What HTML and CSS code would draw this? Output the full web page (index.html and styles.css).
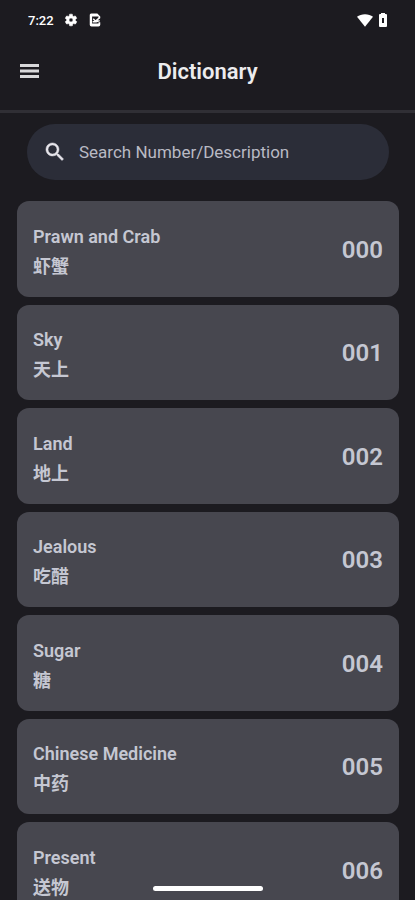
FILE: index.html
```html
<!DOCTYPE html>
<html lang="en">
<head>
<meta charset="utf-8">
<meta name="viewport" content="width=device-width, initial-scale=1">
<title>Dictionary</title>
<link rel="stylesheet" href="styles.css">
</head>
<body>
<div class="status">
  <div class="status-group">
    <span class="clock">7:22</span>
    <svg class="status-icon" viewBox="0 0 24 24" aria-hidden="true"><path fill="currentColor" stroke="currentColor" fill-rule="evenodd" d="M19.4 13a7.500 7.500 0 0 0 0-2l2.100-1.700c.2-.1.300-.4.100-.6l-2-3.500c-.1-.2-.4-.3-.6-.2l-2.500 1a7.300 7.300 0 0 0-1.700-1l-.4-2.600a.5.5 0 0 0-.5-.4h-4a.5.5 0 0 0-.5.4L9.100 5a7.700 7.700 0 0 0-1.700 1L5 5c-.2-.1-.5 0-.6.200l-2 3.500c-.1.200-.1.500.1.600L4.600 11a8 8 0 0 0 0 2l-2.100 1.700c-.2.100-.2.400-.1.600l2 3.500c.1.200.4.300.6.200l2.400-1c.5.400 1.100.7 1.700 1l.4 2.600c0 .2.200.4.500.4h4c.2 0 .5-.2.500-.4l.4-2.600c.6-.3 1.200-.6 1.700-1l2.500 1c.2.100.5 0 .6-.2l2-3.500c.1-.2.100-.5-.1-.6zM12 15.500a3.500 3.500 0 1 1 0-7 3.500 3.500 0 0 1 0 7z"/></svg>
    <svg class="status-icon" viewBox="0 0 24 24" aria-hidden="true"><path fill="currentColor" fill-rule="evenodd" d="M7 1h9l5 5v3h-3V6H7v12h11v-2h3v4a3 3 0 0 1-3 3H6a3 3 0 0 1-3-3V4a3 3 0 0 1 4-3z"/><path fill="none" stroke="currentColor" stroke-width="2.500" d="M9 10l4 4 7-6M8 15h6l6-2"/></svg>
  </div>
  <div class="status-group status-right">
    <svg class="status-icon wifi" viewBox="0 0 24 20" aria-hidden="true"><path fill="currentColor" d="M12 20L0 5C6 0 18 0 24 5z"/></svg>
    <svg class="battery" viewBox="0 0 10 14" aria-hidden="true"><path fill="currentColor" fill-rule="evenodd" d="M3 0h4v1h1a1 1 0 0 1 1 1v11a1 1 0 0 1-1 1H2a1 1 0 0 1-1-1V2a1 1 0 0 1 1-1h1zM4 5h2v5H4z"/></svg>
  </div>
</div>
<header class="bar">
  <button class="menu" type="button" aria-label="Menu">
    <svg viewBox="0 0 20 14" aria-hidden="true"><path fill="currentColor" d="M0 0h19v3H0zM0 5.500h19v3H0zM0 11h19v3H0z"/></svg>
  </button>
  <h1 class="title">Dictionary</h1>
</header>
<main>
  <form class="search" role="search">
    <label class="search-icon" for="query" aria-label="Search"><svg viewBox="0 0 24 24" aria-hidden="true"><path fill="currentColor" stroke="currentColor" stroke-width=".5" d="M15.500 14h-.8l-.3-.3A6.500 6.500 0 1 0 13.700 14.400l.3.300v.8l5 5 1.500-1.500zm-6 0a4.500 4.500 0 1 1 0-9 4.500 4.500 0 0 1 0 9z"/></svg></label>
    <input class="search-input" id="query" type="text" placeholder="Search Number/Description">
  </form>
  <ul class="list">
    <li class="card"><div class="words"><p class="name">Prawn and Crab</p><p class="hanzi" lang="zh-Hans">虾蟹</p></div><span class="number">000</span></li>
    <li class="card"><div class="words"><p class="name">Sky</p><p class="hanzi" lang="zh-Hans">天上</p></div><span class="number">001</span></li>
    <li class="card"><div class="words"><p class="name">Land</p><p class="hanzi" lang="zh-Hans">地上</p></div><span class="number">002</span></li>
    <li class="card"><div class="words"><p class="name">Jealous</p><p class="hanzi" lang="zh-Hans">吃醋</p></div><span class="number">003</span></li>
    <li class="card"><div class="words"><p class="name">Sugar</p><p class="hanzi" lang="zh-Hans">糖</p></div><span class="number">004</span></li>
    <li class="card"><div class="words"><p class="name">Chinese Medicine</p><p class="hanzi" lang="zh-Hans">中药</p></div><span class="number">005</span></li>
    <li class="card"><div class="words"><p class="name">Present</p><p class="hanzi" lang="zh-Hans">送物</p></div><span class="number">006</span></li>
  </ul>
</main>
<div class="home-indicator"></div>
</body>
</html>
```
FILE: styles.css
```css
* {
  box-sizing: border-box;
}

body {
  margin: 0;
  height: 100vh;
  display: flex;
  flex-direction: column;
  overflow: hidden;
  background: #1c1b20;
  color: #c5c7d2;
  font-family: Roboto, "Noto Sans CJK SC", sans-serif;
}

.status {
  flex: none;
  height: 40px;
  padding: 0 27px 0 28px;
  display: flex;
  align-items: center;
  justify-content: space-between;
  color: #fff;
}

.status-group {
  display: flex;
  align-items: center;
  gap: 10px;
}

.status-right {
  gap: 5px;
}

.clock {
  font-size: 13px;
  font-weight: 500;
}

.status-icon {
  width: 14px;
  height: 14px;
}

.wifi {
  width: 16px;
}

.battery {
  width: 10px;
  height: 14px;
}

.bar {
  flex: none;
  height: 73px;
  padding: 0 20px 8px;
  display: grid;
  grid-template-columns: 20px 1fr 20px;
  align-items: center;
  border-bottom: 3px solid #302f35;
}

.menu {
  padding: 0;
  border: 0;
  background: none;
  color: #d8d8da;
  line-height: 0;
}

.menu svg {
  width: 20px;
  height: 14px;
}

.title {
  margin: 0;
  text-align: center;
  font-size: 22px;
  font-weight: 600;
  color: #ececee;
}

main {
  flex: 1;
  min-height: 0;
  padding: 11px 16px 0 17px;
  overflow: hidden;
}

.search {
  height: 56px;
  margin: 0 10px 21px;
  padding: 0 16px;
  display: flex;
  align-items: center;
  gap: 12px;
  border-radius: 28px;
  background: #2b2d38;
}

.search-icon {
  width: 24px;
  height: 24px;
  color: #e6e4ea;
}

.search-input {
  flex: 1;
  min-width: 0;
  padding: 0;
  border: 0;
  outline: 0;
  background: none;
  color: inherit;
  font: 400 17px/24px Roboto, sans-serif;
}

.search-input::placeholder {
  color: #b9bac4;
  opacity: 1;
}

.list {
  margin: 0;
  padding: 0;
  list-style: none;
  display: grid;
  gap: 8px;
}

.card {
  aspect-ratio: 4 / 1;
  padding: 2px 16px 0;
  display: flex;
  align-items: center;
  justify-content: space-between;
  border-radius: 12px;
  background: #47474f;
}

.words {
  padding-top: 4px;
}

.name,
.hanzi {
  margin: 0;
  font-size: 18px;
  line-height: 30px;
  font-weight: 600;
}

.number {
  font-size: 24px;
  font-weight: 600;
}

.home-indicator {
  position: fixed;
  left: 50%;
  bottom: 9px;
  width: 110px;
  height: 5px;
  margin-left: -55px;
  border-radius: 3px;
  background: #fff;
}
```
